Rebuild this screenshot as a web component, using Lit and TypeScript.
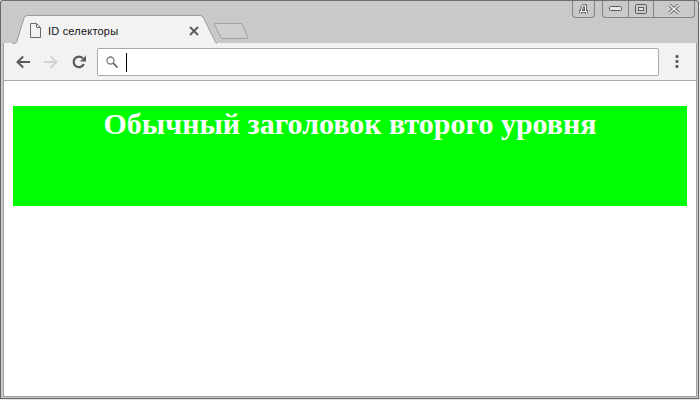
import { LitElement, html, css } from "lit";
import { customElement } from "lit/decorators.js";

@customElement("app-root")
export class AppRoot extends LitElement {
  static styles = css`
    :host { display: block; width: 700px; height: 400px; overflow: hidden; background: #e6e6e6; }
    * { box-sizing: border-box; }
    .window {
      width: 699px; height: 399px; display: flex; flex-direction: column;
      background: #c9c9c9; border: 1px solid #666; border-top-color: #707070;
      border-radius: 3px 3px 0 0; padding: 0 1px 1px 2px;
    }
    .strip { height: 42px; flex: none; display: flex; align-items: flex-start; position: relative; }
    .tab {
      width: 205px; height: 29px; margin-top: 14px; margin-left: 9px; flex: none;
      position: relative; display: flex; align-items: center;
      padding: 2px 0 0 18px;
    }
    .tab-bg { position: absolute; left: 0; top: 0; }
    .doc { position: relative; margin-right: 7px; flex: none; }
    .title {
      position: relative; font: 11px "Liberation Sans", Arial, sans-serif;
      color: #111; width: 141px; white-space: nowrap; letter-spacing: 0.2px;
    }
    .close { position: relative; flex: none; }
    .newtab { margin-top: 21px; margin-left: -4px; flex: none; }
    .spacer { flex: 1; }
    .caps { display: flex; align-items: flex-start; height: 17px; flex: none; margin-right: 2px; }
    .lang {
      width: 23px; height: 17px; margin-right: 7px; display: flex; align-items: center; justify-content: center;
      border: 1px solid #828282; border-top: 0; border-radius: 0 0 4px 4px;
    }
    .group {
      display: flex; height: 17px; border: 1px solid #828282; border-top: 0; border-radius: 0 0 4px 4px;
    }
    .cap { height: 16px; display: flex; align-items: center; justify-content: center; }
    .cap + .cap { border-left: 1px solid #828282; }
    .c-min { width: 25px; }
    .c-max { width: 25px; }
    .c-close { width: 41px; }
    .toolbar {
      height: 37px; flex: none; background: #f2f2f2;
      border: 1px solid #a0a0a0; border-width: 0 1px 0 1px;
      display: flex; align-items: center; padding: 1px 0 0 12px;
    }
    .rule { height: 1px; background: #a8a8a8; flex: none; }
    .nav { width: 28px; height: 24px; display: flex; align-items: center; flex: none; }
    .omni {
      width: 562px; height: 28px; margin-left: -3px; flex: none; background: #fff;
      border: 1px solid #a9a9a9; border-radius: 2px; display: flex; align-items: center; padding: 0 0 0 8px;
    }
    .caret { width: 1px; height: 19px; background: #000; margin-left: 8px; }
    .menu { margin-left: 16px; flex: none; }
    .page {
      flex: 1; background: #fff; padding: 25px 9px 0 9px;
      border: 1px solid #a0a0a0; border-width: 0 1px 1px 1px;
    }
    h2 {
      margin: 0; height: 100px; background: #00ff00; color: #fff; text-align: center;
      font: bold 30px/36px "Liberation Serif", "Times New Roman", serif;
    }
  `;

  render() {
    return html`
      <div class="window">
        <div class="strip">
          <div class="tab">
            <svg class="tab-bg" width="205" height="29" viewBox="0 0 205 29">
              <path d="M0.500 29 H2 Q4 29 5 26 L12 3 Q13 0.500 15.500 0.500 H188 Q190.500 0.500 191.500 3 L203 26 Q204 29 205 29 Z" fill="#f2f2f2" stroke="none"/>
              <path d="M0.500 28.500 H2 Q4 28.500 5 26 L12 3 Q13 0.500 15.500 0.500 H188 Q190.500 0.500 191.500 3 L203 26 Q204 28.500 205 28.500" fill="none" stroke="#9a9a9a"/>
            </svg>
            <svg class="doc" width="11" height="15" viewBox="0 0 11 15">
              <path d="M0.500 0.500 H6.500 L10.500 4.500 V14.500 H0.500 Z M6.500 0.500 V4.500 H10.500" fill="none" stroke="#6a6a6a"/>
            </svg>
            <span class="title">ID селекторы</span>
            <svg class="close" width="10" height="10" viewBox="0 0 10 10">
              <path d="M1 1 L9 9 M9 1 L1 9" stroke="#5a5a5a" stroke-width="1.800"/>
            </svg>
          </div>
          <svg class="newtab" width="36" height="18" viewBox="0 0 36 18">
            <path d="M2 1.500 Q1 1.500 1.500 3 L8 15.500 Q8.500 16.500 10 16.500 H33.500 Q35 16.500 34.500 15 L29.500 2.500 Q29 1.500 28 1.500 Z" fill="#cfcfcf" stroke="#a0a0a0"/>
          </svg>
          <div class="spacer"></div>
          <div class="caps">
            <div class="lang">
              <svg width="9" height="11" viewBox="0 0 11 13">
                <path d="M4 2 H8 V9 H9.500 V12 M1.500 12 V9 H2.500 Q4 7 4 2 M2 9 H8" fill="none" stroke="#3a3a3a" stroke-width="3.400"/>
                <path d="M4 2 H8 V9 H9.500 V12 M1.500 12 V9 H2.500 Q4 7 4 2 M2 9 H8" fill="none" stroke="#fff" stroke-width="1.500"/>
              </svg>
            </div>
            <div class="group">
              <div class="cap c-min">
                <svg width="13" height="6" viewBox="0 0 13 6"><rect x="0.500" y="0.500" width="12" height="4" rx="1" fill="#e8e8e8" stroke="#5c5c5c"/></svg>
              </div>
              <div class="cap c-max">
                <svg width="12" height="10" viewBox="0 0 12 10"><rect x="0.500" y="0.500" width="11" height="9" rx="1" fill="none" stroke="#5c5c5c"/><rect x="3.500" y="3.500" width="5" height="3" fill="#e8e8e8" stroke="#5c5c5c"/></svg>
              </div>
              <div class="cap c-close">
                <svg width="12" height="10" viewBox="0 0 12 10">
                  <path d="M1.500 1 L10.500 9 M10.500 1 L1.500 9" stroke="#666" stroke-width="3.200"/>
                  <path d="M1.500 1 L10.500 9 M10.500 1 L1.500 9" stroke="#f4f4f4" stroke-width="1.500"/>
                </svg>
              </div>
            </div>
          </div>
        </div>
        <div class="toolbar">
          <div class="nav">
            <svg width="14" height="14" viewBox="0 0 14 14"><path d="M14 7 H2 M7.200 1.500 L1.500 7 L7.200 12.500" fill="none" stroke="#5a5a5a" stroke-width="2"/></svg>
          </div>
          <div class="nav">
            <svg width="14" height="14" viewBox="0 0 14 14"><path d="M0 7 H12 M6.800 1.500 L12.500 7 L6.800 12.500" fill="none" stroke="#d2d2d2" stroke-width="2"/></svg>
          </div>
          <div class="nav">
            <svg width="14" height="14" viewBox="0 0 14 14"><path d="M11.800 9 A5.300 5.300 0 1 1 10.800 3.200" fill="none" stroke="#5a5a5a" stroke-width="2.200"/><path d="M14 0.500 V6.500 H8 Z" fill="#5a5a5a"/></svg>
          </div>
          <div class="omni">
            <svg width="12" height="12" viewBox="0 0 12 12"><circle cx="4.500" cy="4.500" r="3.500" fill="none" stroke="#7a7a7a" stroke-width="1.300"/><path d="M7.200 7.200 L11.500 11.500" stroke="#6a6a6a" stroke-width="1.800"/></svg>
            <div class="caret"></div>
          </div>
          <svg class="menu" width="4" height="14" viewBox="0 0 4 14"><g fill="#5a5a5a"><rect x="0.500" y="0" width="3" height="3" rx="1"/><rect x="0.500" y="5" width="3" height="3" rx="1"/><rect x="0.500" y="10" width="3" height="3" rx="1"/></g></svg>
        </div>
        <div class="rule"></div>
        <div class="page">
          <h2>Обычный заголовок второго уровня</h2>
        </div>
      </div>
    `;
  }
}
